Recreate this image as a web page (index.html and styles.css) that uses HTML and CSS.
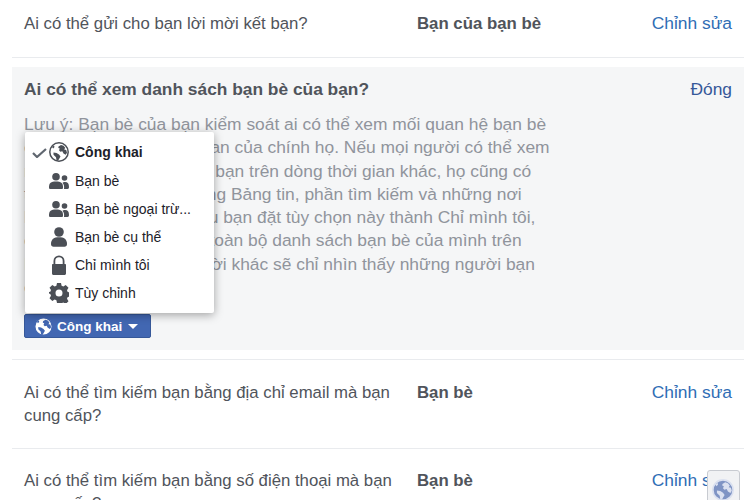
FILE: index.html
```html
<!DOCTYPE html>
<html lang="vi">
<head>
<meta charset="utf-8">
<title>Quyền riêng tư</title>
<link rel="stylesheet" href="styles.css">
</head>
<body>
<svg class="defs" width="0" height="0" aria-hidden="true">
  <defs>
    <symbol id="globe" viewBox="0 0 20 20">
      <circle class="sea" cx="10" cy="10" r="9.200"/>
      <path class="land" d="M9.500 4.500l2.500-1.500 2.500.8 1.700 2-1 1.700 2 .5.800 2.700-1.300 2-2.200-1.300-1.200-2.200-2 .6-1.300-1.500.8-1.800-1.500-.5zM4.500 10.500l3 .5 2.500 1.500 1.500 2-1 1.700-1.500 2.600-1.500-.5-.5-3-2.500-2.500zM3 5l2-1.500.5 1.500-1.300 1.500z"/>
    </symbol>
    <symbol id="friends" viewBox="0 0 20 16">
      <circle cx="7" cy="3.800" r="3.800"/>
      <path d="M0 14.500c0-4.800 2-6 7-6s7 1.200 7 6c0 1-.5 1.500-1.500 1.500h-11C.5 16 0 15.500 0 14.500z"/>
      <circle class="second" cx="15.500" cy="5" r="2.800"/>
      <path class="second" d="M15 9c3.500-.4 5 1 5 5 0 1-.5 2-1.500 2H15c.3-2.500.2-4.500-1.500-6.300z"/>
    </symbol>
    <symbol id="person" viewBox="0 0 18 20">
      <circle cx="9" cy="5" r="4.800"/>
      <path d="M1 17c0-5 3-6.800 8-6.800s8 1.800 8 6.800c0 1.800-1 2.800-2.500 2.800h-11C2 19.800 1 18.800 1 17z"/>
    </symbol>
    <symbol id="lock" viewBox="0 0 14 20">
      <path fill-rule="evenodd" d="M1 9h.5V6a5.500 5.500 0 0 1 11 0v3h.5c.6 0 1 .4 1 1v8.500c0 .8-.7 1.500-1.500 1.500h-11C.7 20 0 19.300 0 18.500V10c0-.6.4-1 1-1zM3.300 9h7.400V6a3.700 3.700 0 0 0-7.400 0z"/>
    </symbol>
    <symbol id="gear" viewBox="0 0 20 20">
      <path fill-rule="evenodd" d="M8 0h4l.6 2.800 1.700.7L16.700 2l2.800 2.800-1.500 2.400.7 1.700 2.800.6v4l-2.800.6-.7 1.700 1.500 2.400-2.800 2.800-2.400-1.500-1.700.7L12 20H8l-.6-2.800-1.700-.7L3.300 18 .5 15.200 2 12.800l-.7-1.700L0 10.500V8.900l1.300-.1.700-1.700L.5 4.800 3.300 2l2.400 1.500 1.700-.7zM10 6.500a3.500 3.500 0 1 0 0 7 3.500 3.500 0 0 0 0-7z"/>
    </symbol>
    <symbol id="tick" viewBox="0 0 15 10">
      <path d="M1 5l4 4 9-8" fill="none" stroke="currentColor" stroke-width="2.200"/>
    </symbol>
  </defs>
</svg>
<main class="page">
  <section class="row row-first">
    <div class="question">Ai có thể gửi cho bạn lời mời kết bạn?</div>
    <div class="value">Bạn của bạn bè</div>
    <a class="edit" href="#">Chỉnh sửa</a>
  </section>
  <section class="panel">
    <div class="panel-head">
      <h2 class="panel-title">Ai có thể xem danh sách bạn bè của bạn?</h2>
      <a class="close" href="#">Đóng</a>
    </div>
    <p class="note">Lưu ý: Bạn bè của bạn kiểm soát ai có thể xem mối quan hệ bạn bè<br>
    của họ trên Dòng thời gian của chính họ. Nếu mọi người có thể xem<br>
    mối quan hệ của họ, với bạn trên dòng thời gian khác, họ cũng có<br>
    thể thấy Quan hệ đó trong Bảng tin, phần tìm kiếm và những nơi<br>
    khác trên Facebook. Nếu bạn đặt tùy chọn này thành Chỉ mình tôi,<br>
    chỉ bạn mới có thể xem toàn bộ danh sách bạn bè của mình trên<br>
    Dòng thời gian. Mọi người khác sẽ chỉ nhìn thấy những người bạn<br>
    chung.</p>
    <div class="picker">
      <ul class="menu">
        <li class="item item-active"><svg class="check"><use href="#tick"/></svg><svg class="ic"><use href="#globe"/></svg><span>Công khai</span></li>
        <li class="item"><svg class="ic"><use href="#friends"/></svg><span>Bạn bè</span></li>
        <li class="item"><svg class="ic ic-except"><use href="#friends"/></svg><span>Bạn bè ngoại trừ...</span></li>
        <li class="item"><svg class="ic"><use href="#person"/></svg><span>Bạn bè cụ thể</span></li>
        <li class="item"><svg class="ic"><use href="#lock"/></svg><span>Chỉ mình tôi</span></li>
        <li class="item"><svg class="ic"><use href="#gear"/></svg><span>Tùy chỉnh</span></li>
      </ul>
      <button class="button" type="button"><svg class="btn-globe"><use href="#globe"/></svg><span>Công khai</span><i class="caret"></i></button>
    </div>
  </section>
  <section class="row">
    <div class="question">Ai có thể tìm kiếm bạn bằng địa chỉ email mà bạn cung cấp?</div>
    <div class="value">Bạn bè</div>
    <a class="edit" href="#">Chỉnh sửa</a>
  </section>
  <section class="row row-last">
    <div class="question">Ai có thể tìm kiếm bạn bằng số điện thoại mà bạn cung cấp?</div>
    <div class="value">Bạn bè</div>
    <a class="edit" href="#">Chỉnh sửa</a>
  </section>
</main>
<div class="widget"><svg class="widget-globe"><use href="#globe"/></svg></div>
</body>
</html>
```
FILE: styles.css
```css
* { box-sizing: border-box; }
html, body { margin: 0; height: 500px; overflow: hidden; background: #fff; }
body { font-family: "Liberation Sans", Arial, sans-serif; color: #50545b; position: relative; }
.defs { position: absolute; }
.page { padding: 0 6px 0 12px; }
.row {
  display: grid;
  grid-template-columns: 393px 1fr auto;
  padding: 21px 12px;
  line-height: 23px;
  border-bottom: 1px solid #e9ebee;
}
.row-first { padding-top: 12px; padding-bottom: 22px; margin-bottom: 9px; }
.row-last { padding-top: 20px; }
.question { padding-right: 10px; font-size: 16.750px; }
.value { font-weight: bold; font-size: 16.800px; }
.edit { color: #2f6db5; text-decoration: none; font-size: 17.400px; }
.panel {
  background: #f5f6f7;
  height: 283px;
  padding: 11px 12px 0;
  margin-bottom: 10px;
  box-shadow: 0 9px 0 #fff, 0 10px 0 #e9ebee;
}
.panel-head { display: flex; justify-content: space-between; line-height: 23px; }
.panel-title { margin: 0; font-size: 17.350px; font-weight: bold; }
.close { color: #365899; text-decoration: none; font-size: 17.400px; }
.note { margin: 12px 0 0; font-size: 17.400px; line-height: 23.300px; color: #90949c; white-space: nowrap; }
.picker { position: relative; margin-top: 15px; width: 127px; }
.button {
  display: flex;
  align-items: center;
  width: 127px;
  height: 24px;
  padding: 0 0 0 9px;
  border: 1px solid #365899;
  border-radius: 2px;
  background: #4267b2;
  color: #fff;
  font: bold 13.500px "Liberation Sans", Arial, sans-serif;
}
.btn-globe { width: 19px; height: 19px; margin-right: 4px; --sea: #fff; --land: #4267b2; }
.btn-globe .sea { stroke: none; }
.caret { margin-left: 6px; border: 5px solid transparent; border-top-color: #fff; border-bottom: 0; }
.menu {
  position: absolute;
  left: 1px;
  bottom: 25px;
  width: 189px;
  margin: 0;
  padding: 6px 0;
  list-style: none;
  background: #fff;
  border-radius: 2px;
  box-shadow: 0 2px 10px rgba(0, 0, 0, .35);
}
.item {
  position: relative;
  display: flex;
  align-items: center;
  height: 28.200px;
  padding-left: 24px;
  font-size: 14px;
  color: #1d2129;
}
.item-active { font-weight: bold; }
.check { position: absolute; left: 7px; top: 10px; width: 15px; height: 10px; color: #606770; }
.ic { width: 20px; height: 20px; margin-right: 6px; fill: #4b4f56; --sea: #fff; --land: #4b4f56; }
.sea { fill: var(--sea); stroke: var(--land); stroke-width: 1.500px; }
.land { fill: var(--land); }
.ic-except .second { fill: #d0d2d6; }
.widget {
  position: absolute;
  left: 707px;
  top: 470px;
  width: 33px;
  height: 40px;
  background: #f1f2f4;
  border: 1px solid #c8cbd1;
  border-radius: 3px;
  padding: 8px 0 0 4px;
}
.widget-globe { width: 22px; height: 22px; --sea: #7f94c4; --land: #dbe1f0; }
.widget-globe .sea { stroke: none; }
```
